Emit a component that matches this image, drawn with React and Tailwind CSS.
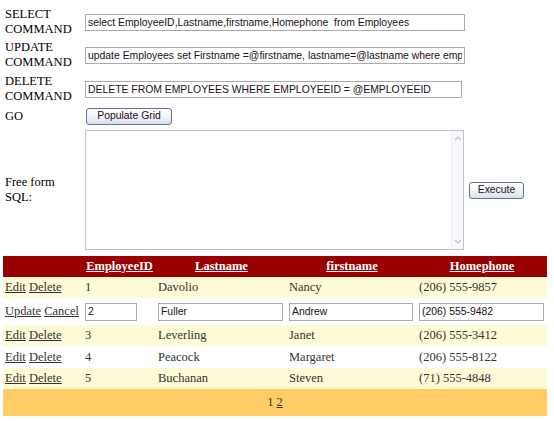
import React from "react";

const inputCls =
  "h-[17px] border border-[#a7abb0] bg-white px-[2px] font-['Liberation_Sans',Arial,sans-serif] text-[10.4px] text-[#1b1020] outline-none";
const btnCls =
  "h-[17px] rounded-[3px] border border-[#62739a] bg-linear-to-b from-white via-[#f3f4f8] to-[#d9deea] font-['Liberation_Sans',Arial,sans-serif] text-[10.4px] text-[#1b1020] leading-none p-0";

function Chevron({ up }) {
  return (
    <svg width="8" height="5" viewBox="0 0 8 5" className="block">
      <path
        d={up ? "M1 4 L4 1 L7 4" : "M1 1 L4 4 L7 1"}
        fill="none"
        stroke="#b9bec7"
        strokeWidth="1.2"
      />
    </svg>
  );
}

const rows = [
  { id: "1", last: "Davolio", first: "Nancy", phone: "(206) 555-9857" },
  { id: "2", last: "Fuller", first: "Andrew", phone: "(206) 555-9482", edit: true },
  { id: "3", last: "Leverling", first: "Janet", phone: "(206) 555-3412" },
  { id: "4", last: "Peacock", first: "Margaret", phone: "(206) 555-8122" },
  { id: "5", last: "Buchanan", first: "Steven", phone: "(71) 555-4848" },
];

const rowHeights = ["h-[21px]", "h-[27px]", "h-[21px]", "h-[22px]", "h-[21px]"];

export default function App() {
  return (
    <div className="w-[554px] h-[421px] overflow-hidden bg-white font-['Liberation_Serif','Times_New_Roman',serif] text-[12.5px] text-black">
      <div className="flex flex-col pt-[7px]">
        <div className="flex h-[30px] items-center">
          <div className="w-[85px] pl-[5px] leading-[15px]">SELECT<br />COMMAND</div>
          <input
            className={inputCls + " w-[380px]"}
            defaultValue="select EmployeeID,Lastname,firstname,Homephone  from Employees"
            readOnly
          />
        </div>
        <div className="mt-[3px] flex h-[30px] items-center">
          <div className="w-[85px] pl-[5px] leading-[15px]">UPDATE<br />COMMAND</div>
          <input
            className={inputCls + " w-[380px]"}
            defaultValue="update Employees set Firstname =@firstname, lastname=@lastname where employeeid=@employeeid"
            readOnly
          />
        </div>
        <div className="mt-[4px] flex h-[30px] items-center">
          <div className="w-[85px] pl-[5px] leading-[15px]">DELETE<br />COMMAND</div>
          <input
            className={inputCls + " w-[377px]"}
            defaultValue="DELETE FROM EMPLOYEES WHERE EMPLOYEEID = @EMPLOYEEID"
            readOnly
          />
        </div>
        <div className="mt-[3px] flex h-[19px] items-center">
          <div className="w-[86px] pl-[5px] leading-[15px]">GO</div>
          <button className={btnCls + " w-[86px]"}>Populate Grid</button>
        </div>
        <div className="mt-[4px] flex h-[120px] items-center">
          <div className="w-[85px] pl-[5px] leading-[15px]">Free form<br />SQL:</div>
          <div className="flex h-[120px] w-[379px] border border-[#bfc2c6] bg-white">
            <div className="flex-1" />
            <div className="flex w-[12px] flex-col items-center justify-between bg-[#f6f8fb] border-l border-[#eef0f4] py-[5px]">
              <Chevron up />
              <Chevron />
            </div>
          </div>
          <button className={btnCls + " ml-[5px] w-[55px]"}>Execute</button>
        </div>
      </div>

      <table className="mx-[3px] mt-[6px] w-[544px] table-fixed border-collapse text-[#333333]">
        <colgroup>
          <col className="w-[80px]" />
          <col className="w-[73px]" />
          <col className="w-[131px]" />
          <col className="w-[130px]" />
          <col className="w-[130px]" />
        </colgroup>
        <thead>
          <tr className="h-[21px] bg-[#990000] text-white font-bold">
            <th className="p-0"></th>
            <th className="p-0 text-center"><a className="underline">EmployeeID</a></th>
            <th className="p-0 text-center"><a className="underline">Lastname</a></th>
            <th className="p-0 text-center"><a className="underline">firstname</a></th>
            <th className="p-0 text-center"><a className="underline">Homephone</a></th>
          </tr>
        </thead>
        <tbody>
          {rows.map((r, i) => (
            <tr
              key={r.id}
              className={rowHeights[i] + " " + (i % 2 === 0 ? "bg-[#fffbd6]" : "bg-white")}
            >
              {r.edit ? (
                <>
                  <td className="px-[2px] py-0 whitespace-nowrap">
                    <a className="underline">Update</a> <a className="underline">Cancel</a>
                  </td>
                  <td className="px-[2px] py-0">
                    <input className={inputCls + " h-[18px] w-[52px] block"} defaultValue={r.id} readOnly />
                  </td>
                  <td className="px-[2px] py-0">
                    <input className={inputCls + " h-[18px] w-[125px] block"} defaultValue={r.last} readOnly />
                  </td>
                  <td className="px-[2px] py-0">
                    <input className={inputCls + " h-[18px] w-[124px] block"} defaultValue={r.first} readOnly />
                  </td>
                  <td className="px-[2px] py-0">
                    <input className={inputCls + " h-[18px] w-[125px] block"} defaultValue={r.phone} readOnly />
                  </td>
                </>
              ) : (
                <>
                  <td className="px-[2px] py-0 whitespace-nowrap">
                    <a className="underline">Edit</a> <a className="underline">Delete</a>
                  </td>
                  <td className="px-[2px] py-0">{r.id}</td>
                  <td className="px-[2px] py-0">{r.last}</td>
                  <td className="px-[2px] py-0">{r.first}</td>
                  <td className="px-[2px] py-0">{r.phone}</td>
                </>
              )}
            </tr>
          ))}
          <tr className="h-[27px] bg-[#ffcc66]">
            <td colSpan={5} className="p-0 text-center">
              1 <a className="underline">2</a>
            </td>
          </tr>
        </tbody>
      </table>
    </div>
  );
}
